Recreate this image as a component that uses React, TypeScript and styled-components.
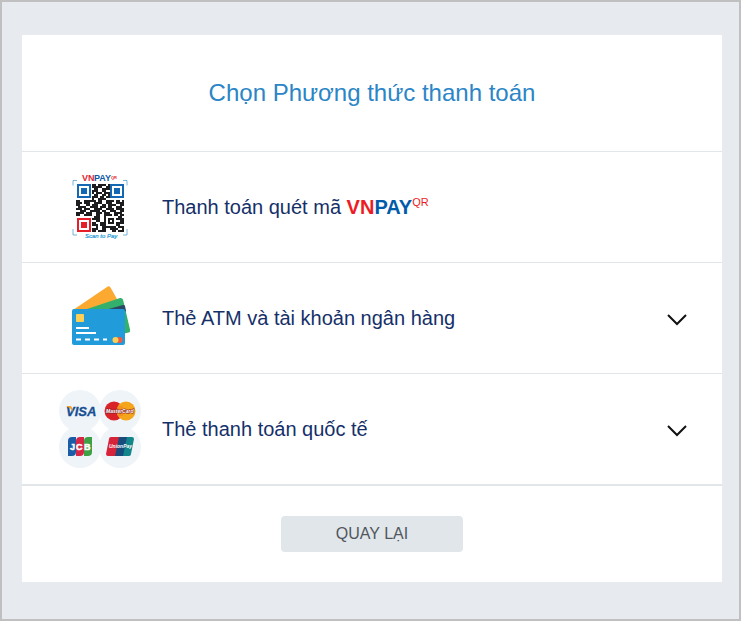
import React from "react";
import styled, { createGlobalStyle } from "styled-components";

const GlobalStyle = createGlobalStyle`
  * { box-sizing: border-box; }
  html, body, #root { height: 100%; }
  body {
    margin: 0;
    background: #e7eaef;
    font-family: "Liberation Sans", Arial, sans-serif;
  }
`;

const Page = styled.main`
  min-height: 100%;
  padding: 33px 17px 37px 20px;
  border: 2px solid #c0c0c0;
`;

const Card = styled.section`
  background: #fff;
`;

const CardHeader = styled.header`
  display: flex;
  align-items: center;
  justify-content: center;
  height: 117px;
  border-bottom: 1px solid #e3e6e9;
`;

const Title = styled.h1`
  margin: 0;
  font-size: 24px;
  line-height: 28px;
  font-weight: 400;
  color: #2b85c6;
`;

const MethodList = styled.ul`
  margin: 0;
  padding: 0;
  list-style: none;
  border-bottom: 1px solid #e3e6e9;
`;

const MethodItem = styled.li`
  border-bottom: 1px solid #e3e6e9;
`;

const MethodButton = styled.button`
  display: grid;
  grid-template-columns: 84px 1fr 20px;
  column-gap: 20px;
  align-items: center;
  width: 100%;
  height: 110px;
  padding: 0 35px 0 36px;
  border: 0;
  background: transparent;
  font: inherit;
  text-align: left;
  cursor: pointer;
`;

const MethodIcon = styled.span`
  display: flex;
  align-items: center;
  justify-content: center;

  svg { display: block; }
`;

const MethodLabel = styled.span`
  font-size: 20px;
  line-height: 24px;
  color: #153069;
`;

const Brand = styled.strong<{ $color: string }>`
  color: ${(p) => p.$color};
`;

const BrandSuffix = styled.sup`
  font-size: 11px;
  line-height: 0;
  color: #ed1c24;
`;

const Chevron = styled.svg`
  display: block;
  margin-top: 4px;
`;

const CardFooter = styled.footer`
  display: flex;
  justify-content: center;
  padding: 30px;
`;

const BackButton = styled.button`
  width: 182px;
  height: 36px;
  padding: 0;
  border: 0;
  border-radius: 4px;
  background: #e1e6ea;
  font: inherit;
  font-size: 16px;
  line-height: 20px;
  color: #50565d;
  cursor: pointer;
`;

const modules = [
  "        ## #### #       ",
  "        #####  ##       ",
  "         ##  ####       ",
  "        ###  ##         ",
  "        # ### ###       ",
  "         ##  ## #       ",
  "        ### ## ##       ",
  "        #  ####         ",
  "##  ###### ##  #### ## #",
  "### ###  ####  ###  ####",
  "##   ## ###  ## ####  ##",
  " ####  #### ### ##  ### ",
  "### ###  ####  #### ####",
  "  ###  ##### ##  ###  ##",
  "#### ###  ### ###  #### ",
  "##  ####  ##  #### ## ##",
  "         ###  #      ## ",
  "        ####  # ### ####",
  "          ##  # # #   ##",
  "        ##  ### ### ####",
  "        ### ###     ##  ",
  "          #  ####### ###",
  "        ###  ##  ####  #",
  "        ## ####   ## ###",
];

const modulePath = modules
  .map((row, y) =>
    Array.from(row)
      .map((cell, x) => (cell === "#" ? `M${x * 2} ${y * 2}h2v2h-2z` : ""))
      .join("")
  )
  .join("");

function Finder({ x, y, color }: { x: number; y: number; color: string }) {
  return (
    <g fill={color}>
      <path fillRule="evenodd" d={`M${x} ${y}h14v14h-14zm2 2v10h10v-10z`} />
      <rect x={x + 4} y={y + 4} width="6" height="6" />
    </g>
  );
}

function QrIcon() {
  return (
    <svg width="60" height="66" viewBox="0 0 60 66" aria-hidden="true">
      <g fontFamily="Liberation Sans, Arial, sans-serif" fontWeight="700">
        <text x="12" y="7" fontSize="9" fill="#e3262e">VN</text>
        <text x="24" y="7" fontSize="9" fill="#0b5aa8">PAY</text>
        <text x="41" y="5" fontSize="4" fill="#e3262e">QR</text>
        <text x="15" y="64" fontSize="6" fontStyle="italic" fontWeight="400" fill="#1c9ad6" stroke="#1c9ad6" strokeWidth=".2">Scan to Pay</text>
      </g>
      <path d="M7 6.500H3v5M53 6.500h4v5M3 55v6h4M53 61h4v-6" fill="none" stroke="#79b4dc" />
      <g transform="translate(6 10)">
        <path d={modulePath} fill="#1d1d20" />
        <Finder x={1} y={0} color="#1467b3" />
        <Finder x={34} y={0} color="#1467b3" />
        <Finder x={1} y={34} color="#e61e29" />
      </g>
    </svg>
  );
}

function CardsIcon() {
  return (
    <svg width="60" height="64" viewBox="0 2 60 64" aria-hidden="true">
      <path d="M3 26 37 3q2-1.500 3.500.500L47 15 30 30z" fill="#fba930" />
      <path d="M14 26 50 14q2-.500 3 1.500l7 30q.500 3-1.500 3l-8 2z" fill="#32b06c" />
      <path d="M35 26 53 21q1.500-.500 2 1l1 5-6 5z" fill="#2c4963" />
      <rect x="2" y="25" width="53" height="36" rx="2" fill="#219bd9" />
      <rect x="6" y="30" width="8" height="8" rx="1" fill="#fdcf55" />
      <path d="M6 44h13M6 49h20M6 55.500h5m4 0h5m4 0h5m4 0h4" stroke="#fff" strokeWidth="2" />
      <circle cx="49.500" cy="56" r="3" fill="#ef5a42" />
      <circle cx="45.500" cy="56" r="3" fill="#fdcf55" />
    </svg>
  );
}

function CardBrandsIcon() {
  return (
    <svg width="84" height="80" viewBox="0 0 84 80" aria-hidden="true" fontFamily="Liberation Sans, Arial, sans-serif" fontWeight="700">
      <g fill="#eff4f9">
        <circle cx="22" cy="22" r="21" />
        <circle cx="62" cy="22" r="21" />
        <circle cx="22" cy="58" r="21" />
        <circle cx="62" cy="58" r="21" />
      </g>
      <text x="8" y="27" fontSize="13" fontStyle="italic" fill="#164f92" stroke="#164f92" strokeWidth=".3">VISA</text>
      <path d="M8 17h4q2 0 2 2l1 4q-2-4-7-6z" fill="#efa12d" />

      <circle cx="56" cy="22" r="9.500" fill="#d92329" />
      <circle cx="68" cy="22" r="9.500" fill="#f5a51c" />
      <path d="M60 18h5M59 20h6M59 24h6M60 26h5" stroke="#ef7f22" strokeWidth="1" />
      <text x="48" y="24" fontSize="5" fontStyle="italic" fill="#fff" stroke="#8c2126" strokeWidth="1" paintOrder="stroke">MasterCard</text>

      <path d="M14 48h4v15q0 4-4 4h-4V52q0-4 4-4z" fill="#1c5ba6" />
      <path d="M22 48h4v15q0 4-4 4h-4V52q0-4 4-4z" fill="#d62746" />
      <path d="M30 48h4v15q0 4-4 4h-4V52q0-4 4-4z" fill="#3da044" />
      <text x="12" y="61" fontSize="9" fill="#fff" stroke="#fff" strokeWidth=".500">J</text>
      <text x="18" y="61" fontSize="9" fill="#fff" stroke="#fff" strokeWidth=".500">C</text>
      <text x="26" y="61" fontSize="9" fill="#fff" stroke="#fff" strokeWidth=".500">B</text>

      <path d="M53 48h9l-4 19h-8q-2 0-2-2l3-15q0-2 2-2z" fill="#d72339" />
      <path d="M61 48h9l-4 19h-9z" fill="#174c7d" />
      <path d="M69 48h5q2 0 2 2l-3 15q0 2-2 2h-6z" fill="#12868a" />
      <text x="51" y="59" fontSize="5" fontStyle="italic" fill="#fff">UnionPay</text>
    </svg>
  );
}

interface Method {
  id: string;
  icon: React.ReactNode;
  label: React.ReactNode;
  expandable: boolean;
}

const methods: Method[] = [
  {
    id: "qr",
    icon: <QrIcon />,
    label: (
      <>
        Thanh toán quét mã <Brand $color="#ed1c24">VN</Brand>
        <Brand $color="#005baa">PAY</Brand>
        <BrandSuffix>QR</BrandSuffix>
      </>
    ),
    expandable: false,
  },
  { id: "atm", icon: <CardsIcon />, label: "Thẻ ATM và tài khoản ngân hàng", expandable: true },
  { id: "international", icon: <CardBrandsIcon />, label: "Thẻ thanh toán quốc tế", expandable: true },
];

export default function App() {
  return (
    <>
      <GlobalStyle />
      <Page>
        <Card>
          <CardHeader>
            <Title>Chọn Phương thức thanh toán</Title>
          </CardHeader>
          <MethodList>
            {methods.map((method) => (
              <MethodItem key={method.id}>
                <MethodButton type="button" aria-expanded={method.expandable ? false : undefined}>
                  <MethodIcon>{method.icon}</MethodIcon>
                  <MethodLabel>{method.label}</MethodLabel>
                  {method.expandable && (
                    <Chevron width="20" height="12" viewBox="0 0 20 12" aria-hidden="true">
                      <path d="m1 1 9 9 9-9" fill="none" stroke="#111" strokeWidth="2" />
                    </Chevron>
                  )}
                </MethodButton>
              </MethodItem>
            ))}
          </MethodList>
          <CardFooter>
            <BackButton type="button">QUAY LẠI</BackButton>
          </CardFooter>
        </Card>
      </Page>
    </>
  );
}
